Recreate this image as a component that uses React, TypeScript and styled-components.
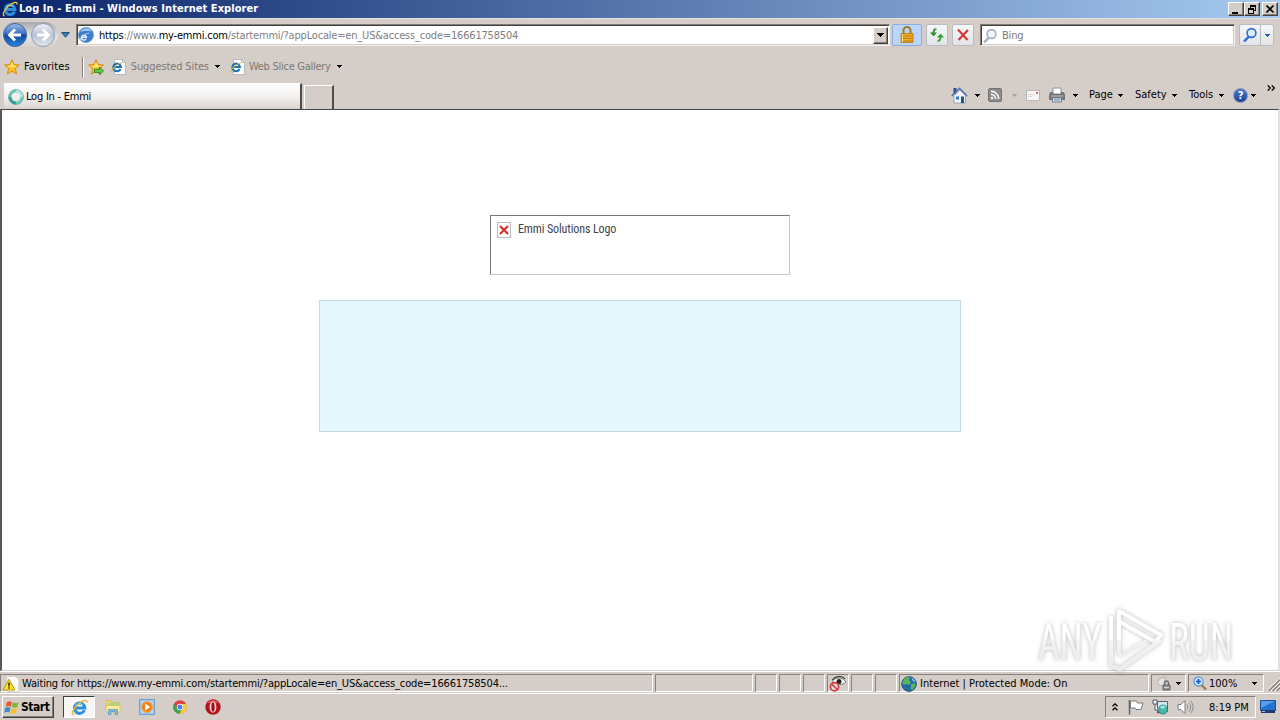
import * as React from "react";
import styled, { createGlobalStyle, css } from "styled-components";

const GlobalStyle = createGlobalStyle`
  * {
    box-sizing: border-box;
  }

  body {
    margin: 0;
    overflow: hidden;
    background: #d5cec8;
    color: #000;
    font-family: "DejaVu Sans Condensed", "DejaVu Sans", sans-serif;
    font-stretch: condensed;
    font-size: 11px;
    line-height: 14px;
  }

  svg {
    display: block;
    flex: none;
  }
`;

const Arrow: React.FC<{ color?: string }> = ({ color = "#000" }) => (
  <svg width="5" height="3" viewBox="0 0 5 3" shapeRendering="crispEdges">
    <path d="M0 0h5v1H4v1H3v1H2V2H1V1H0z" fill={color} />
  </svg>
);

const IeLogo: React.FC<{ size: number }> = ({ size }) => (
  <svg width={size} height={size} viewBox="0 0 16 16" fill="none">
    <path
      d="M12.6 10.6A4.9 4.9 0 1 1 13 8.5H4.6"
      stroke="#2a8fdc"
      strokeWidth="2.9"
    />
    <path d="M4.5 6.2C6 3.8 9.4 3.8 11 5.6" stroke="#7fd3f8" strokeWidth="1.3" />
    <path
      d="M2.7 14.8C-.2 14.9 1.5 9.7 6.2 5.4 10.8 1.2 15.5-.2 15.1 3.5"
      stroke="#e9b92f"
      strokeWidth="1.4"
    />
  </svg>
);

const IePage: React.FC = () => (
  <svg width="16" height="16" viewBox="0 0 16 16" fill="none">
    <path d="M3.5.5h8l3 3v12h-11z" fill="#fff" stroke="#b6b9bd" />
    <path d="M11.5.5v3h3" stroke="#b6b9bd" />
    <path d="M9.6 10A3.8 3.8 0 1 1 9.9 8H3.5" stroke="#1673b9" strokeWidth="2.1" />
    <path d="M1 13.3C-.5 11.7 7 3.4 10.7 4.4" stroke="#d7b43e" strokeWidth="1.1" />
  </svg>
);

const PageGlobe: React.FC = () => (
  <svg width="16" height="16" viewBox="0 0 16 16" fill="none">
    <circle cx="8" cy="8" r="7.5" fill="#3e7dcc" stroke="#6b9ce0" />
    <path d="M2.5 5C4.5.5 11-.2 13.6 4.5 11 4 6 3.5 2.5 5z" fill="#9fc6f1" />
    <path d="M8 12A2.5 2.5 0 1 1 8.4 10.2H3.6" stroke="#e8f4ff" strokeWidth="1.4" />
    <path d="M2.3 13c0-3 5-7 9-6.8" stroke="#bddcff" strokeWidth=".8" />
  </svg>
);

const NavArrow: React.FC<{ active?: boolean }> = ({ active }) => (
  <svg width="26" height="26" viewBox="0 0 26 26">
    <defs>
      <linearGradient id="navOn" x2="0" y2="1">
        <stop offset="0" stopColor="#9cbce8" />
        <stop offset=".45" stopColor="#3c71c0" />
        <stop offset=".5" stopColor="#12469d" />
        <stop offset="1" stopColor="#2b86db" />
      </linearGradient>
      <linearGradient id="navOff" x2="0" y2="1">
        <stop offset="0" stopColor="#f1f3f7" />
        <stop offset=".5" stopColor="#b9c2d2" />
        <stop offset="1" stopColor="#e4e9f1" />
      </linearGradient>
    </defs>
    <circle
      cx="13"
      cy="13"
      r="11.5"
      fill={active ? "url(#navOn)" : "url(#navOff)"}
      stroke={active ? "#41629b" : "#8d9bb4"}
    />
    <path
      d={active ? "M19 13H8M13 7.5 7.5 13l5.5 5.5" : "M7 13h11M13 7.5l5.5 5.5-5.5 5.5"}
      fill="none"
      stroke="#fff"
      strokeWidth="2.8"
    />
  </svg>
);

const Star: React.FC<{ add?: boolean }> = ({ add }) => (
  <svg width="16" height="16" viewBox="0 0 16 16">
    <path
      d="M8 .7l2.1 4.8 5.3.5-4 3.6 1.2 5.5L8 12.2l-4.6 2.9 1.2-5.5-4-3.6 5.3-.5z"
      fill="#fbc02c"
      stroke="#d6860b"
      strokeWidth=".9"
    />
    <path d="M8 2.8 9.3 6.5 13 7 8 8.5 3 7l3.8-.6z" fill="#ffec82" />
    {add && (
      <path
        d="M6.5 10.3h5V8l4 4-4 3.7v-2.3h-5z"
        fill="#5fcb43"
        stroke="#208322"
        strokeWidth=".9"
      />
    )}
  </svg>
);

const Magnifier: React.FC<{ color: string; glass: string }> = ({ color, glass }) => (
  <svg width="16" height="16" viewBox="0 0 16 16" fill="none">
    <path d="M7 9.5 2 14.5" stroke={color} strokeWidth="2.4" />
    <circle cx="9.5" cy="6" r="4.4" fill={glass} stroke={color} strokeWidth="1.6" />
  </svg>
);

const LockIcon: React.FC = () => (
  <svg width="16" height="18" viewBox="0 0 16 18">
    <path
      d="M4.5 8V4.5a3.5 3.5 0 0 1 7 0V8"
      fill="none"
      stroke="#a37a24"
      strokeWidth="2"
    />
    <path d="M2 7.5h12v9H2z" fill="#f0ad25" stroke="#b3780d" strokeWidth=".8" />
    <path d="M2.5 10h11M2.5 12.5h11M2.5 15h11" stroke="#bd7e0e" />
    <path d="M3.5 8v8" stroke="#ffdb6d" />
  </svg>
);

const RefreshIcon: React.FC = () => (
  <svg width="16" height="16" viewBox="0 0 16 16" fill="none">
    <path d="M7.5 2C5 2 4.5 3.5 4.5 6" stroke="#2f8b2b" strokeWidth="1.7" />
    <path d="M1 5.5h7L4.5 9.3z" fill="#2f8b2b" />
    <path d="M8.5 14c2.5 0 3-1.5 3-4" stroke="#2f9b2b" strokeWidth="1.7" />
    <path d="M8 10.5h7l-3.5-3.8z" fill="#2f9b2b" />
  </svg>
);

const StopIcon: React.FC = () => (
  <svg width="14" height="14" viewBox="0 0 14 14">
    <path d="M2 1.5l9.5 10.5M12 2 2.5 12" stroke="#d3383c" strokeWidth="2.2" />
  </svg>
);

const Spinner: React.FC = () => (
  <svg width="16" height="16" viewBox="0 0 16 16" fill="none">
    <circle cx="8" cy="8" r="6" stroke="#70c9b7" strokeWidth="3" />
    <path d="M8 2a6 6 0 0 1 6 6" stroke="#b9e7dc" strokeWidth="3" />
    <path d="M2 8a6 6 0 0 0 6 6" stroke="#3f9f9b" strokeWidth="3" />
    <circle cx="8" cy="8" r="7.5" stroke="#4c9d95" strokeWidth=".6" />
  </svg>
);

const HomeIcon: React.FC = () => (
  <svg width="17" height="17" viewBox="0 0 17 17">
    <path d="M2.5 1h3v6h-3z" fill="#344a91" />
    <path d="M3 8.5 9 3l5.5 5.5V16H3z" fill="#f1f5fb" stroke="#8997b5" strokeWidth=".8" />
    <path d="M.7 9 8.5 1.3 16 9" fill="none" stroke="#5372b3" strokeWidth="1.6" />
    <path d="M10 9.5h3V16h-3z" fill="#1f568f" />
    <path d="M5 9.5h3v3H5z" fill="#3377b4" />
  </svg>
);

const RssIcon: React.FC = () => (
  <svg width="14" height="14" viewBox="0 0 14 14" fill="none">
    <rect x=".5" y=".5" width="13" height="13" rx="1.5" fill="#8d8d8d" stroke="#717171" />
    <circle cx="4" cy="10" r="1.2" fill="#fff" />
    <path d="M3 6.3A4.7 4.7 0 0 1 7.7 11M3 3.3A7.7 7.7 0 0 1 10.7 11" stroke="#fff" strokeWidth="1.4" />
  </svg>
);

const MailIcon: React.FC = () => (
  <svg width="14" height="11" viewBox="0 0 14 11">
    <path d="M.5.5h13v10H.5z" fill="#f7f5f5" stroke="#bab6b7" />
    <path d="M2 4.5h5M2 6.5h4" stroke="#dad7d8" />
    <path d="M10 2h2v2h-2z" fill="#d26a6e" />
  </svg>
);

const PrinterIcon: React.FC = () => (
  <svg width="16" height="16" viewBox="0 0 16 16">
    <path d="M4 1h8v6H4z" fill="#fff" stroke="#8e9093" />
    <path d="M1.5 5.5h2v2h9v-2h2L15.5 8v4.5H.5V8z" fill="#777b80" stroke="#5f6266" strokeWidth=".8" />
    <path d="M2 9h12" stroke="#bfc3c8" />
    <path d="M3.5 11h9v4h-9z" fill="#dcecf8" stroke="#74797f" />
    <path d="M5 13h6" stroke="#4583b8" />
  </svg>
);

const WarningIcon: React.FC = () => (
  <svg width="17" height="16" viewBox="0 0 17 16">
    <path d="M5 .5h8l3.5 3v12H5z" fill="#fff" stroke="#dcdad8" />
    <path d="M7 3.2 13 14H1z" fill="#ffe11d" stroke="#b79a0b" strokeLinejoin="round" />
    <path d="M7 6.4v4M7 11.3v1.4" stroke="#222" strokeWidth="1.4" />
  </svg>
);

const PrivacyIcon: React.FC = () => (
  <svg width="18" height="16" viewBox="0 0 18 16" fill="none">
    <path d="M3 6C6 1 13 .5 17 6c-4 3.5-9 3.5-13 0z" fill="#fff" stroke="#777" />
    <circle cx="10" cy="5.5" r="2.5" fill="#222" />
    <path d="M3 4C7-.5 13-.5 16 3" stroke="#333" strokeWidth="1.1" />
    <circle cx="5.5" cy="10.8" r="4.1" fill="#f4dddd" stroke="#cf3f42" strokeWidth="1.7" />
    <path d="M2.8 8.1l5.4 5.4" stroke="#cf3f42" strokeWidth="1.7" />
  </svg>
);

const GlobeIcon: React.FC = () => (
  <svg width="16" height="16" viewBox="0 0 16 16">
    <circle cx="8" cy="8" r="7.4" fill="#2462b5" stroke="#224b7b" strokeWidth=".8" />
    <path d="M3 3C5 .8 8 .7 9 1.4L8 4l2 2-2 3-3-1-2 1-2-2zM10 8l4-1 .5 3-3 4-2-1z" fill="#55b659" />
    <path d="M10 1.5c3 1 4 3 4.4 5L12 5z" fill="#8fc9ef" />
    <path d="M2 10c2 4 6 5 8 4.5L7 12z" fill="#1c7f80" />
  </svg>
);

const PadlockGray: React.FC = () => (
  <svg width="16" height="15" viewBox="0 0 16 15" fill="none">
    <path d="M1 8c1-4 4-7 8-7v10z" fill="#e3e2e2" stroke="#b2afad" />
    <path d="M8.5 9V7a2 2 0 0 1 4 0v2" stroke="#65676a" strokeWidth="1.3" />
    <path d="M7 9h7v5H7z" fill="#929498" stroke="#606265" />
    <path d="M8 11.5h5" stroke="#d1d2d4" />
  </svg>
);

const ZoomIcon: React.FC = () => (
  <svg width="14" height="15" viewBox="0 0 14 15" fill="none">
    <path d="M8 8.5l5 5" stroke="#a77a4c" strokeWidth="2.4" />
    <circle cx="5.5" cy="5.5" r="4.6" fill="#c7e3fb" stroke="#5b97d6" strokeWidth="1.2" />
    <path d="M3 5.5h5M5.5 3v5" stroke="#1456b3" strokeWidth="1.6" />
  </svg>
);

const Grip: React.FC = () => (
  <svg width="13" height="13" viewBox="0 0 13 13">
    <path d="M0 13 13 0M4 13l9-9M8 13l5-5" stroke="#fff" />
    <path d="M1.5 13 13 1.5M5.5 13 13 5.5M9.5 13 13 9.5" stroke="#85807a" strokeWidth="1.4" />
  </svg>
);

const WindowsFlag: React.FC = () => (
  <svg width="16" height="15" viewBox="0 0 16 15">
    <path d="M2.8 2.3C4.5 1 6.3 1 8 2L6.8 6.8C5 5.7 3.2 5.9 1.5 7z" fill="#e9592b" />
    <path d="M8.8 2.3c1.8 1 3.8 1 5.9-.2L13.4 7c-2 1.1-4 1-5.8 0z" fill="#83b83b" />
    <path d="M1.2 8C3 6.8 4.8 6.8 6.5 7.9L5.2 12.6C3.5 11.6 1.7 11.7 0 12.8z" fill="#3c8bd0" />
    <path d="M7.3 8.2c1.8 1 3.8 1 5.9-.2l-1.3 4.9c-2 1.1-4 1-5.8 0z" fill="#f6bf2c" />
  </svg>
);

const ExplorerIcon: React.FC = () => (
  <svg width="16" height="16" viewBox="0 0 16 16">
    <path d="M1 1.5h5l1 2h7v9H1z" fill="#f4d774" stroke="#d7b34c" strokeWidth=".8" />
    <path d="M3 3.7h11v3H3z" fill="#a9d683" />
    <path d="M1 6.5h14v6.5H1z" fill="#fbea9f" stroke="#dfc05b" strokeWidth=".8" />
    <path d="M3.5 15.5v-5h9v5h-2.2v-3H5.8v3z" fill="#7eb9e4" stroke="#5293c6" strokeWidth=".7" />
  </svg>
);

const MediaIcon: React.FC = () => (
  <svg width="16" height="16" viewBox="0 0 16 16">
    <path d="M.5.5h15v15H.5z" fill="#9dc7ec" stroke="#6ba0d2" />
    <path d="M2 2h12v12H2z" fill="#b9d8f3" />
    <circle cx="8" cy="8" r="5.8" fill="#ee7e16" />
    <circle cx="8" cy="8" r="5.1" fill="none" stroke="#f9a63c" />
    <path d="M6.2 4.5 11.3 8l-5.1 3.5z" fill="#fff" />
  </svg>
);

const ChromeIcon: React.FC = () => (
  <svg width="14" height="14" viewBox="0 0 14 14">
    <circle cx="7" cy="7" r="6.8" fill="#e34133" />
    <path d="M1.1 3.6A6.8 6.8 0 0 0 6.3 13.8L9.4 8.6 4.5 8.5z" fill="#3ba456" />
    <path d="M13.1 4A6.8 6.8 0 0 1 6.3 13.8L9.7 8.3 8 4z" fill="#f9ce3a" />
    <circle cx="7" cy="7" r="3.2" fill="#fff" />
    <circle cx="7" cy="7" r="2.5" fill="#4a86e2" />
  </svg>
);

const OperaIcon: React.FC = () => (
  <svg width="16" height="16" viewBox="0 0 16 16">
    <circle cx="8" cy="8" r="7.7" fill="#b5141b" />
    <path d="M2 4.5C4 .5 11-.2 14 4.5 10 3 6 3 2 4.5z" fill="#db6267" />
    <ellipse cx="8" cy="8" rx="3.4" ry="5.6" fill="#f6dada" />
    <ellipse cx="8" cy="8" rx="1.6" ry="4.8" fill="#951016" />
  </svg>
);

const TrayChevron: React.FC = () => (
  <svg width="6" height="8" viewBox="0 0 6 8" fill="none">
    <path d="M.5 3.3 3 .9l2.5 2.4M.5 7.3 3 4.9l2.5 2.4" stroke="#000" strokeWidth="1.3" />
  </svg>
);

const TrayFlag: React.FC = () => (
  <svg width="16" height="16" viewBox="0 0 16 16" fill="none">
    <path d="M1.5 1v14.5" stroke="#66696d" strokeWidth="1.6" />
    <path d="M2.5 2h6l1 2h5.5l-2 6.5H8l-1-1.5H2.5z" fill="#fff" stroke="#777a7e" />
  </svg>
);

const NetworkIcon: React.FC = () => (
  <svg width="17" height="16" viewBox="0 0 17 16" fill="none">
    <path d="M5.5 2.5h10v10h-10z" fill="#d4e9ef" stroke="#5d6468" />
    <path d="M1 1h4v4H1zM3 5v6h3" fill="#fff" stroke="#565b60" />
    <path d="M5 13.5h4" stroke="#565b60" strokeWidth="1.5" />
    <circle cx="11" cy="10.5" r="4.5" fill="#45b7a6" stroke="#277b7e" strokeWidth=".8" />
    <path d="M8 8.5c2-3 4-2 6-.5l-3 2z" fill="#a6e5d6" />
  </svg>
);

const SpeakerIcon: React.FC = () => (
  <svg width="17" height="16" viewBox="0 0 17 16" fill="none">
    <path d="M1 5.5h3l4-4v13l-4-4H1z" fill="#fff" stroke="#777a7d" />
    <path d="M10 5.5q2 2.5 0 5M12 3.5q3.5 4.5 0 9M14 1.8q4 6 0 12.4" stroke="#8b8e91" />
  </svg>
);

const DesktopIcon: React.FC = () => (
  <svg width="16" height="14" viewBox="0 0 16 14">
    <path d="M.5.5h15v10H.5z" fill="#2373cf" stroke="#1d4d92" />
    <path d="M1 1h14L1 8z" fill="#579de6" />
    <path d="M1 10h14v3H1z" fill="#1c3c6e" />
    <path d="M2 11.5h3" stroke="#9dc6ef" />
  </svg>
);

const Watermark: React.FC = () => (
  <WatermarkSvg width="230" height="80" viewBox="0 0 230 80">
    <defs>
      <linearGradient id="mark" gradientUnits="userSpaceOnUse" x1="0" x2="0" y1="14" y2="60">
        <stop offset=".4" stopColor="#fff" />
        <stop offset=".5" stopColor="#f3f3f3" />
        <stop offset="1" stopColor="#ededed" />
      </linearGradient>
    </defs>
    <g fill="url(#mark)" fontFamily="Roboto, sans-serif" fontSize="51">
      <text x="7" y="55" textLength="64" lengthAdjust="spacingAndGlyphs">
        ANY
      </text>
      <text x="138" y="55" textLength="64" lengthAdjust="spacingAndGlyphs">
        RUN
      </text>
    </g>
    <g fill="none" stroke="url(#mark)" strokeWidth="4" strokeLinejoin="round">
      <path d="M88 48V6l42 24-6 7-35-20" />
      <path d="M80 11v50l9 3 41-29" />
      <path d="M89 21v30l27-16" strokeWidth="2" />
    </g>
  </WatermarkSvg>
);

const statusSlots = [98, 22, 22, 22];

const App: React.FC = () => (
  <Desktop>
    <GlobalStyle />
    <TitleBar>
      <IeLogo size={16} />
      <Title>Log In - Emmi - Windows Internet Explorer</Title>
      <CaptionButton>
        <svg width="8" height="9" shapeRendering="crispEdges">
          <path d="M0 7h6v2H0z" />
        </svg>
      </CaptionButton>
      <CaptionButton>
        <svg width="8" height="9" shapeRendering="crispEdges">
          <path
            d="M2 0h6v6H6V5h1V2H3v1H2zM0 3h6v6H0zm1 2v3h4V5z"
            fillRule="evenodd"
          />
        </svg>
      </CaptionButton>
      <CaptionButton $gap={2}>
        <svg width="8" height="8">
          <path d="M.5.5l7 7M7.5.5l-7 7" stroke="#000" strokeWidth="1.7" />
        </svg>
      </CaptionButton>
    </TitleBar>

    <NavBar>
      <NavButtons>
        <NavArrow active />
        <NavArrow />
      </NavButtons>
      <HistoryArrow>
        <svg width="9" height="6" viewBox="0 0 9 6">
          <path d="M.7.6h7.6L4.5 5.2z" fill="#3c80b8" stroke="#184c7c" />
        </svg>
      </HistoryArrow>
      <AddressField>
        <PageGlobe />
        <Url>
          <b>https</b>://www.<b>my-emmi.com</b>
          /startemmi/?appLocale=en_US&amp;access_code=16661758504
        </Url>
        <ComboButton>
          <svg width="7" height="4" shapeRendering="crispEdges">
            <path d="M0 0h7v1H6v1H5v1H4v1H3V3H2V2H1V1H0z" />
          </svg>
        </ComboButton>
      </AddressField>
      <GlassButton $width={30} $blue>
        <LockIcon />
      </GlassButton>
      <GlassButton $width={22} $gap={4}>
        <RefreshIcon />
      </GlassButton>
      <GlassButton $width={22} $gap={4}>
        <StopIcon />
      </GlassButton>
      <SearchField>
        <Magnifier color="#a3b0be" glass="#eff7fd" />
        <Label $muted $spacing={-0.2}>
          Bing
        </Label>
      </SearchField>
      <GlassButton $width={22} $gap={4}>
        <Magnifier color="#2f6cd0" glass="#dcecff" />
      </GlassButton>
      <GlassButton $width={14} $gap={-1}>
        <Arrow color="#2459a7" />
      </GlassButton>
    </NavBar>

    <FavoritesBar>
      <Star />
      <Label $left={4} $spacing={0.13}>
        Favorites
      </Label>
      <Divider />
      <Star add />
      <FavoriteLink $left={7}>
        <IePage />
        <Label $left={4} $muted $spacing={-0.12}>
          Suggested Sites
        </Label>
        <Arrow />
      </FavoriteLink>
      <FavoriteLink $left={10}>
        <IePage />
        <Label $left={3} $muted $spacing={-0.27}>
          Web Slice Gallery
        </Label>
        <Arrow />
      </FavoriteLink>
    </FavoritesBar>

    <TabRow>
      <Tab>
        <Spinner />
        <Label $left={2} $spacing={-0.23}>
          Log In - Emmi
        </Label>
      </Tab>
      <NewTab />
      <CommandBar>
        <Command $width={37} $gap={7}>
          <HomeIcon />
          <Arrow />
        </Command>
        <Command $width={38} $gap={10}>
          <RssIcon />
          <Arrow color="#aaa49d" />
        </Command>
        <Command $width={23}>
          <MailIcon />
        </Command>
        <Command $width={40} $gap={8}>
          <PrinterIcon />
          <Arrow />
        </Command>
        <Command $width={46} $gap={5}>
          Page
          <Arrow />
        </Command>
        <Command $width={54} $gap={5}>
          Safety
          <Arrow />
        </Command>
        <Command $width={44} $gap={6}>
          Tools
          <Arrow />
        </Command>
        <Command $width={34} $gap={3}>
          <HelpBall>?</HelpBall>
          <Arrow />
        </Command>
        <Overflow>
          <svg width="8" height="6" viewBox="0 0 8 6" fill="none">
            <path d="M.7.4 3.3 3 .7 5.6M4.7.4 7.3 3 4.7 5.6" stroke="#000" strokeWidth="1.3" />
          </svg>
        </Overflow>
      </CommandBar>
    </TabRow>

    <Viewport>
      <MissingImage>
        <BrokenMark>
          <svg width="10" height="10" viewBox="0 0 10 10">
            <path d="M1 1l8 8M9 1 1 9" stroke="#d8291c" strokeWidth="2" />
          </svg>
        </BrokenMark>
        Emmi Solutions Logo
      </MissingImage>
      <LoginPanel />
      <Watermark />
    </Viewport>

    <StatusBar>
      <StatusCell $width={653}>
        <WarningIcon />
        <Label $left={3} $spacing={-0.155}>
          Waiting for https://www.my-emmi.com/startemmi/?appLocale=en_US&amp;access_code=16661758504...
        </Label>
      </StatusCell>
      {statusSlots.map((width, i) => (
        <StatusCell key={i} $width={width} />
      ))}
      <StatusCell $width={22}>
        <PrivacyIcon />
      </StatusCell>
      <StatusCell $width={22} />
      <StatusCell $width={22} />
      <StatusCell $width={250}>
        <GlobeIcon />
        <Label $left={3} $spacing={0.02}>
          Internet | Protected Mode: On
        </Label>
      </StatusCell>
      <StatusCell $width={35} $pad={4}>
        <PadlockGray />
        <ArrowSlot $left={4}>
          <Arrow />
        </ArrowSlot>
      </StatusCell>
      <StatusCell $width={76} $pad={4}>
        <ZoomIcon />
        <Label $left={2}>100%</Label>
        <ArrowSlot $left={15}>
          <Arrow />
        </ArrowSlot>
      </StatusCell>
      <GripCorner>
        <Grip />
      </GripCorner>
    </StatusBar>

    <Taskbar>
      <StartButton>
        <WindowsFlag />
        Start
      </StartButton>
      <ActiveTask>
        <IeLogo size={17} />
      </ActiveTask>
      <QuickLaunch>
        <ExplorerIcon />
        <MediaIcon />
        <ChromeIcon />
        <OperaIcon />
      </QuickLaunch>
      <Tray>
        <TrayChevron />
        <TrayIcons>
          <TrayFlag />
          <NetworkIcon />
          <SpeakerIcon />
        </TrayIcons>
        <Clock>8:19 PM</Clock>
      </Tray>
      <DesktopIcon />
    </Taskbar>
  </Desktop>
);

export default App;

const raised = css`
  background: #d5cec8;
  border: 1px solid;
  border-color: #fff #404040 #404040 #fff;
  box-shadow: inset -1px -1px 0 #85807a;
`;

const Desktop = styled.div`
  display: flex;
  flex-direction: column;
  width: 1280px;
  height: 720px;
  overflow: hidden;
  background: #d5cec8;
  white-space: nowrap;
`;

const TitleBar = styled.header`
  display: flex;
  align-items: center;
  height: 18px;
  flex: none;
  padding: 0 2px;
  background: linear-gradient(90deg, #0a246a, #a6caf0);
`;

const Title = styled.h1`
  flex: 1;
  margin: 0 0 0 1px;
  color: #fff;
  font-size: 11px;
  font-weight: bold;
  letter-spacing: 0.06px;
`;

const CaptionButton = styled.div<{ $gap?: number }>`
  ${raised}
  display: flex;
  align-items: center;
  justify-content: center;
  width: 16px;
  height: 14px;
  margin-left: ${({ $gap = 0 }) => $gap}px;
`;

const NavBar = styled.div`
  display: flex;
  align-items: center;
  height: 34px;
  flex: none;
  padding: 0 0 1px 2px;
  border-top: 1px solid #e5e1dd;
`;

const NavButtons = styled.div`
  display: flex;
  gap: 2px;
  padding-right: 2px;
  border-radius: 13px;
  background: linear-gradient(#aaa7a9, #e4e4e7 55%, #d5cec8);
`;

const HistoryArrow = styled.div`
  width: 18px;
  padding-left: 3px;
`;

const AddressField = styled.div`
  display: flex;
  align-items: center;
  width: 814px;
  height: 22px;
  padding: 0 0 0 1px;
  background: #fff;
  border: 1px solid;
  border-color: #807b75 #f3f0ed #f3f0ed #807b75;
  box-shadow: inset 1px 1px 0 #404040, inset 0 -1px 0 #d5cec8;
`;

const Url = styled.div`
  flex: 1;
  margin: 2px 0 0 5px;
  color: #808080;
  letter-spacing: -0.19px;

  b {
    color: #000;
    font-weight: normal;
  }
`;

const ComboButton = styled.div`
  ${raised}
  display: flex;
  align-items: center;
  justify-content: center;
  width: 15px;
  height: 17px;
  margin-right: 1px;
`;

const GlassButton = styled.div<{ $width: number; $gap?: number; $blue?: boolean }>`
  display: flex;
  align-items: center;
  justify-content: center;
  width: ${({ $width }) => $width}px;
  height: 22px;
  margin-left: ${({ $gap = 2 }) => $gap}px;
  background: ${({ $blue }) =>
    $blue ? "#bcd6fa" : "linear-gradient(#f5f6f7, #e2e4e7)"};
  border: 1px solid ${({ $blue }) => ($blue ? "#8caddc" : "#b9bbc1")};
  border-radius: 2px;
`;

const SearchField = styled.div`
  display: flex;
  align-items: center;
  gap: 4px;
  width: 255px;
  height: 22px;
  margin-left: 6px;
  padding: 2px 0 0 1px;
  background: #fff;
  border: 1px solid;
  border-color: #807b75 #f3f0ed #f3f0ed #807b75;
  box-shadow: inset 1px 1px 0 #404040, inset -1px -1px 0 #d5cec8;
`;

const FavoritesBar = styled.div`
  display: flex;
  align-items: center;
  height: 29px;
  flex: none;
  padding-left: 4px;
`;

const Label = styled.span<{ $left?: number; $spacing?: number; $muted?: boolean }>`
  margin-left: ${({ $left = 0 }) => $left}px;
  letter-spacing: ${({ $spacing = 0 }) => $spacing}px;
  color: ${({ $muted }) => ($muted ? "#7d7873" : "#000")};
`;

const Divider = styled.div`
  width: 2px;
  height: 20px;
  margin: 0 4px 0 12px;
  background: #85807a;
  border-right: 1px solid #fff;
`;

const FavoriteLink = styled.div<{ $left: number }>`
  display: flex;
  align-items: center;
  margin-left: ${({ $left }) => $left}px;

  > svg:last-child {
    margin-left: 6px;
  }
`;

const TabRow = styled.div`
  display: flex;
  align-items: flex-end;
  height: 28px;
  flex: none;
  padding-left: 4px;
`;

const Tab = styled.div`
  display: flex;
  align-items: center;
  width: 298px;
  height: 26px;
  padding-left: 4px;
  background: linear-gradient(#fff, #f1efed 55%, #d8d2cc);
  border-top: 1px solid #fff;
  border-right: 2px solid #504c48;
`;

const NewTab = styled.div`
  width: 30px;
  height: 24px;
  margin-left: 2px;
  border: solid;
  border-width: 1px 2px 0 1px;
  border-color: #fff #504c48 #fff #fff;
`;

const CommandBar = styled.div`
  display: flex;
  align-items: center;
  height: 28px;
  margin-left: 617px;
`;

const Command = styled.div<{ $width: number; $gap?: number }>`
  display: flex;
  align-items: center;
  gap: ${({ $gap = 0 }) => $gap}px;
  width: ${({ $width }) => $width}px;
  flex: none;
`;

const HelpBall = styled.div`
  width: 15px;
  height: 15px;
  border: 1px solid #8795b4;
  border-radius: 50%;
  background: linear-gradient(#4c78d2, #1b3f9f);
  color: #fff;
  font-weight: bold;
  line-height: 13px;
  text-align: center;
`;

const Overflow = styled.div`
  align-self: flex-start;
  padding-top: 4px;
`;

const Viewport = styled.main`
  position: relative;
  display: flex;
  flex-direction: column;
  align-items: center;
  height: 562px;
  flex: none;
  padding-top: 105px;
  background: #fff;
  border: solid;
  border-width: 1px 2px 1px 2px;
  border-color: #484542 #e4dfdb #d5cec8 #5a5652;
`;

const MissingImage = styled.div`
  display: flex;
  align-items: flex-start;
  gap: 7px;
  width: 300px;
  height: 60px;
  padding: 6px;
  border: 1px solid;
  border-color: #777 #c8c8c8 #c8c8c8 #777;
  color: #3b444c;
  font-family: Roboto, "Liberation Sans", sans-serif;
  font-size: 12px;
  letter-spacing: -0.12px;
`;

const BrokenMark = styled.div`
  display: flex;
  align-items: center;
  justify-content: center;
  width: 14px;
  height: 16px;
  border: 1px solid #bdbdbd;
`;

const LoginPanel = styled.div`
  width: 642px;
  height: 132px;
  margin-top: 25px;
  background: #e5f6fd;
  border: 1px solid #c3dbe4;
`;

const WatermarkSvg = styled.svg`
  position: absolute;
  right: 17px;
  bottom: -15px;
  filter: drop-shadow(0 0 2px rgba(0, 0, 0, 0.28));
`;

const StatusBar = styled.footer`
  display: flex;
  align-items: flex-start;
  gap: 2px;
  height: 23px;
  flex: none;
  padding-top: 2px;
  border-top: 1px solid #fff;
  border-bottom: 1px solid #fff;
`;

const StatusCell = styled.div<{ $width: number; $pad?: number }>`
  display: flex;
  align-items: center;
  width: ${({ $width }) => $width}px;
  height: 18px;
  flex: none;
  padding: 1px 0 0 ${({ $pad = 1 }) => $pad}px;
  border: 1px solid;
  border-color: #85807a #fff #fff #85807a;
`;

const ArrowSlot = styled.span<{ $left: number }>`
  margin-left: ${({ $left }) => $left}px;
`;

const GripCorner = styled.div`
  padding: 4px 0 0 1px;
`;

const Taskbar = styled.nav`
  display: flex;
  align-items: center;
  height: 26px;
  flex: none;
  padding: 0 4px 0 2px;
`;

const StartButton = styled.div`
  ${raised}
  display: flex;
  align-items: center;
  gap: 1px;
  width: 52px;
  height: 22px;
  padding-left: 1px;
  font-size: 12px;
  font-weight: bold;
  letter-spacing: -0.45px;
`;

const ActiveTask = styled.div`
  display: flex;
  align-items: center;
  justify-content: center;
  width: 32px;
  height: 22px;
  margin-left: 9px;
  background: #f8f7f6;
  border: 1px solid;
  border-color: #404040 #fff #fff #404040;
`;

const QuickLaunch = styled.div`
  display: flex;
  align-items: center;
  gap: 18px;
  margin-left: 10px;
`;

const Tray = styled.div`
  display: flex;
  align-items: center;
  width: 151px;
  height: 22px;
  margin: 0 4px 0 auto;
  padding-left: 6px;
  border: 1px solid;
  border-color: #85807a #fff #fff #85807a;
`;

const TrayIcons = styled.div`
  display: flex;
  gap: 8px;
  margin-left: 10px;
`;

const Clock = styled.time`
  margin: 1px 0 0 15px;
`;
